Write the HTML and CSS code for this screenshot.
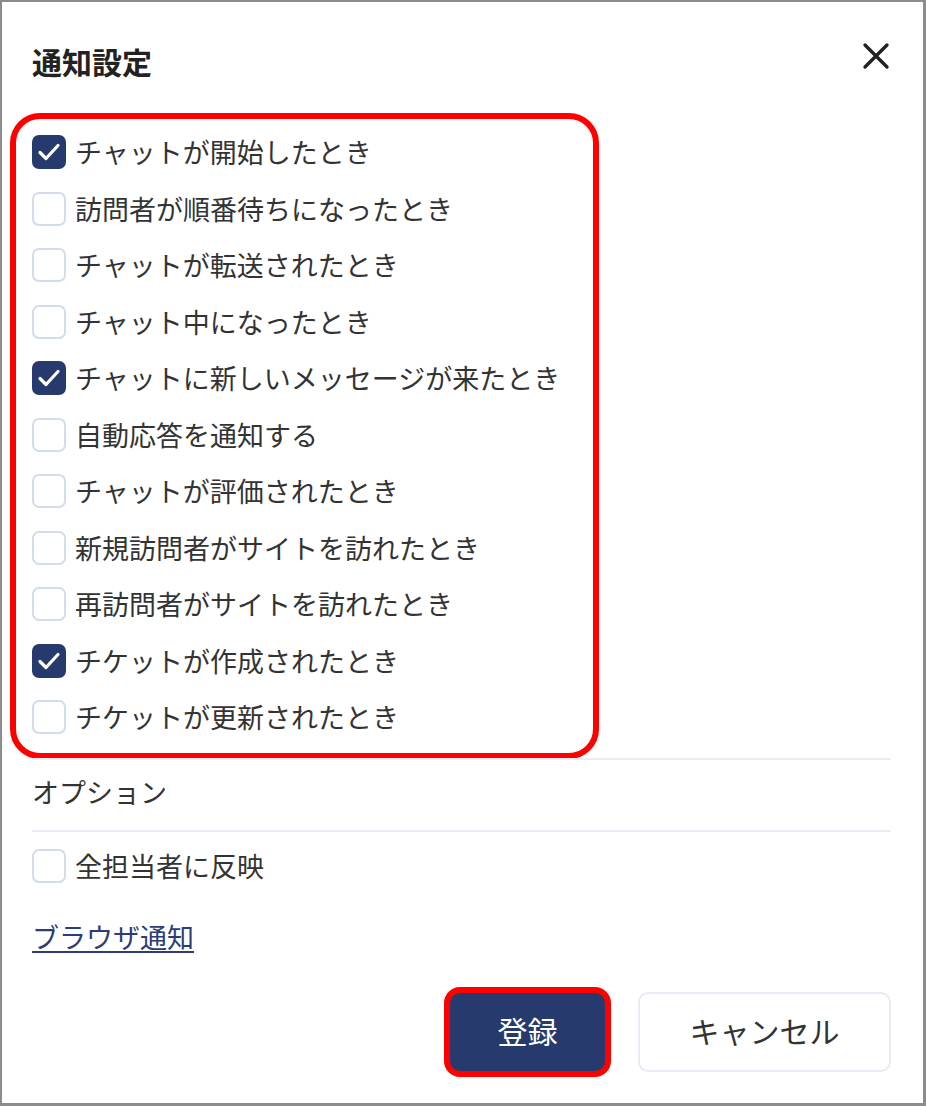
FILE: index.html
```html
<!DOCTYPE html>
<html lang="ja">
<head>
  <meta charset="UTF-8" />
  <title>通知設定</title>
  <link rel="stylesheet" href="styles.css">
</head>
<body>
  <div class="dialog">

    <div class="header">
      <h1 class="title">通知設定</h1>
      <button class="close-btn" aria-label="閉じる">
        <svg width="28" height="28" viewBox="0 0 28 28">
          <path d="M3 3 L25 25 M25 3 L3 25" stroke="#222" stroke-width="3.4" stroke-linecap="round" fill="none"/>
        </svg>
      </button>
    </div>

    <div class="highlight">
      <label class="check-row"><span class="box checked"></span>チャットが開始したとき</label>
      <label class="check-row"><span class="box"></span>訪問者が順番待ちになったとき</label>
      <label class="check-row"><span class="box"></span>チャットが転送されたとき</label>
      <label class="check-row"><span class="box"></span>チャット中になったとき</label>
      <label class="check-row"><span class="box checked"></span>チャットに新しいメッセージが来たとき</label>
      <label class="check-row"><span class="box"></span>自動応答を通知する</label>
      <label class="check-row"><span class="box"></span>チャットが評価されたとき</label>
      <label class="check-row"><span class="box"></span>新規訪問者がサイトを訪れたとき</label>
      <label class="check-row"><span class="box"></span>再訪問者がサイトを訪れたとき</label>
      <label class="check-row"><span class="box checked"></span>チケットが作成されたとき</label>
      <label class="check-row"><span class="box"></span>チケットが更新されたとき</label>
    </div>

    <div class="section-title">オプション</div>

    <div class="option-row">
      <label class="check-row"><span class="box"></span>全担当者に反映</label>
    </div>

    <div class="link-row">
      <a href="#" class="link">ブラウザ通知</a>
    </div>

    <div class="footer">
      <button class="btn btn-primary">登録</button>
      <button class="btn btn-cancel">キャンセル</button>
    </div>

  </div>
</body>
</html>
```

FILE: styles.css
```css
body {
  margin: 0;
  background-color: #fff;
  font-family: "Noto Sans CJK JP", "Noto Sans", sans-serif;
  color: #333;
}

.dialog {
  width: 926px;
  height: 1106px;
  box-sizing: border-box;
  border: 2px solid #8c8c8c;
  border-right-width: 3px;
  border-bottom-width: 3px;
  padding: 0 32px 0 30px;
  background-color: #fff;
}


.header {
  display: flex;
  justify-content: space-between;
  align-items: center;
  height: 40px;
  margin-top: 39px;
  margin-bottom: 32px;
}

.title {
  margin: 0;
  font-size: 30px;
  line-height: 40px;
  font-weight: bold;
  color: #222;
}

.close-btn {
  background: none;
  border: none;
  padding: 0;
  margin: 0 1px 10px 0;
  width: 28px;
  height: 28px;
  cursor: pointer;
}


.highlight {
  width: 589px;
  box-sizing: border-box;
  margin-left: -22px;
  border: 6px solid #ff0000;
  border-radius: 30px;
  padding: 16px 16px 19px 16px;
  display: flex;
  flex-direction: column;
  gap: 22.5px;
}

.check-row {
  display: flex;
  align-items: center;
  gap: 9px;
  height: 34px;
  font-size: 27px;
  line-height: 34px;
  color: #333;
  cursor: pointer;
}

.box {
  flex: none;
  width: 34px;
  height: 34px;
  box-sizing: border-box;
  border: 2px solid #d3dcec;
  border-radius: 7px;
  background-color: #fff;
}

.box.checked {
  border-color: #263a6e;
  background-color: #263a6e;
  background-image: url("data:image/svg+xml,%3Csvg xmlns='http://www.w3.org/2000/svg' width='34' height='34' viewBox='0 0 34 34'%3E%3Cpath d='M8 17.5 L14 23.5 L26 10.5' stroke='white' stroke-width='3.2' fill='none' stroke-linecap='round' stroke-linejoin='round'/%3E%3C/svg%3E");
  background-position: center;
  background-repeat: no-repeat;
}


.section-title {
  border-top: 2px solid #e9edf5;
  border-bottom: 2px solid #e9edf5;
  height: 70px;
  margin-top: -1px;
  font-size: 27px;
  line-height: 64px;
}

.option-row {
  padding: 17px 0;
}

.link-row {
  height: 72px;
  display: flex;
  align-items: center;
}

.link {
  font-size: 27px;
  color: #2c3d75;
  text-decoration: underline;
  text-underline-offset: 3px;
}


.footer {
  display: flex;
  justify-content: flex-end;
  gap: 33px;
  margin-top: 20px;
}

.btn {
  font-family: "Noto Sans CJK JP", "Noto Sans", sans-serif;
  font-size: 30px;
  line-height: 1;
  border-radius: 10px;
  cursor: pointer;
  padding: 0 0 4px 0;
}

.btn-primary {
  width: 155px;
  height: 78px;
  margin-top: 1px;
  background-color: #263a6e;
  color: #fff;
  border: none;
  box-shadow: 0 0 0 6px #ff0000;
}

.btn-cancel {
  width: 253px;
  height: 80px;
  background-color: #fff;
  color: #333;
  border: 2px solid #e6ebf5;
}
```
